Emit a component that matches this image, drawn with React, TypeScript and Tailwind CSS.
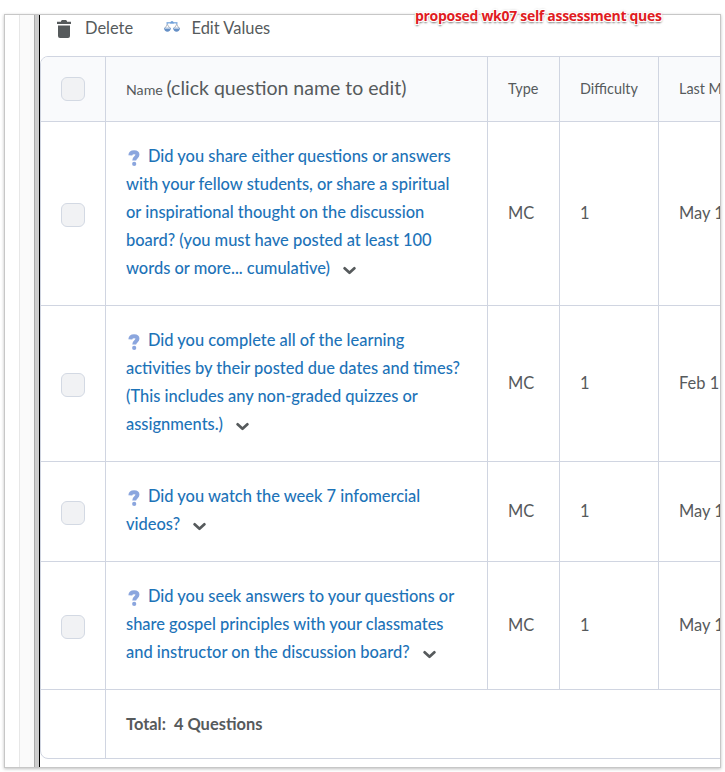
import React from "react";

type Question = { lines: string[]; date: string; height: string };

const questions: Question[] = [
  {
    lines: [
      "Did you share either questions or answers",
      "with your fellow students, or share a spiritual",
      "or inspirational thought on the discussion",
      "board? (you must have posted at least 100",
      "words or more... cumulative)",
    ],
    date: "May 1",
    height: "h-[184px]",
  },
  {
    lines: [
      "Did you complete all of the learning",
      "activities by their posted due dates and times?",
      "(This includes any non-graded quizzes or",
      "assignments.)",
    ],
    date: "Feb 1",
    height: "h-[156px]",
  },
  { lines: ["Did you watch the week 7 infomercial", "videos?"], date: "May 1", height: "h-[100px]" },
  {
    lines: [
      "Did you seek answers to your questions or",
      "share gospel principles with your classmates",
      "and instructor on the discussion board?",
    ],
    date: "May 1",
    height: "h-[128px]",
  },
];

const columns = "grid grid-cols-[65px_382px_72px_99px_62px] border-b border-[#d0d5e1]";
const cell = "flex items-center border-r border-[#d0d5e1] whitespace-nowrap";

function Checkbox() {
  return <span className="ml-5 size-6 rounded-md border border-[#d3d9e3] bg-[#f1f2f4]" />;
}

function QuestionIcon() {
  return (
    <svg className="mr-1.5 mt-[3px] ml-0.5 inline-block h-4 w-3.5" viewBox="0 0 14 16" fill="none">
      <path d="M2.300 5.300C2.500 3 4.100 2.200 6.100 2.200c2.200 0 3.400 1 3.400 2.600C9.500 7.200 6.200 7.300 6.200 10.500" stroke="#8ba6de" strokeWidth="3.900" />
      <circle cx="6.200" cy="13.900" r="2.100" fill="#8ba6de" />
    </svg>
  );
}

function Chevron() {
  return (
    <svg className="ml-[13px] mt-1 inline-block h-[13px] w-[13px]" viewBox="0 0 13 13" fill="none">
      <path d="M1.600 4.300 6.500 8.800 11.400 4.300" stroke="#565a5c" strokeWidth="2.700" strokeLinecap="round" strokeLinejoin="round" />
    </svg>
  );
}

function TrashIcon() {
  return (
    <svg className="h-[18px] w-[14px]" viewBox="0 0 14 18" fill="#565a5c">
      <path d="M0 1.800h4V1l1-1h4l1 1v.8h4v2.200H0zM1 5.500h12V16q0 2-2 2H3q-2 0-2-2z" />
    </svg>
  );
}

function ScalesIcon() {
  return (
    <svg className="h-4 w-4" viewBox="0 0 16 16" fill="none">
      <path d="M3.300 4.800V2.800h9.400v2" stroke="#8db4e2" strokeWidth="1.600" />
      <path d="M6 3.600 6.800 1.500q1.200-.8 2.400 0L10 3.600z" fill="#6f9fd8" />
      <path d="M3.300 4.500.8 8.500m2.500-4L6 8.500m6.700-4L10 8.500m2.700-4 2.500 4" stroke="#b0b5bf" strokeWidth="1" />
      <path d="M0 7.800h6.900c0 5.200-6.900 5.200-6.900 0M9.100 7.800H16c0 5.200-6.900 5.200-6.900 0" fill="#6690c6" />
      <path d="M.8 8.300h5.300M9.900 8.300h5.300" stroke="#c6d6ea" strokeWidth="1" />
    </svg>
  );
}

export default function App() {
  return (
    <div className="relative h-[772px] w-[725px] overflow-hidden bg-white font-['Lato',sans-serif] text-[#565a5c]">
      <div className="pl-1 pt-[14px]">
        <div className="flex h-[754px] w-[717px] overflow-hidden border border-[#c7c7c7] bg-white shadow-[0_1px_3px_rgba(0,0,0,0.25)]">
          <div className="w-[14px] shrink-0" />
          <div className="w-[15px] shrink-0 border-l border-[#e7e7e7] bg-[#fafafa]" />
          <div className="w-[5px] shrink-0 border-l border-[#aaa] bg-[#cdcdcd]" />
          <div className="w-px shrink-0 bg-black" />
          <main className="w-[680px] shrink-0 overflow-hidden">
            <div className="flex h-[41px] items-start pl-[17px] text-[16.45px] leading-[26px]">
              <div className="mt-[5px]"><TrashIcon /></div>
              <span className="ml-[14px] w-[79px]">Delete</span>
              <div className="mt-[5px]"><ScalesIcon /></div>
              <span className="ml-[11.5px]">Edit Values</span>
            </div>
            <div className="w-[700px] overflow-hidden rounded-lg border border-[#d0d5e1]">
              <div className="grid h-[65px] grid-cols-[65px_382px_72px_99px_80px] border-b border-[#d0d5e1] bg-[#f9fafc] text-[14.4px]">
                <div className={cell}><Checkbox /></div>
                <div className={cell + " pb-0.5 pl-5"}>
                  <span><span className="text-[14.2px]">Name </span><span className="text-[19.5px]">(click question name to edit)</span></span>
                </div>
                <div className={cell + " pl-5"}>Type</div>
                <div className={cell + " pl-5"}>Difficulty</div>
                <div className={cell + " pl-5"}>Last Modified</div>
              </div>
              {questions.map((q, i) => (
                <div key={i} className={columns + " " + q.height + " text-[16.45px]"}>
                  <div className={cell + " pt-[3px]"}><Checkbox /></div>
                  <div className={cell + " pb-[3px] pl-5 leading-7 font-medium text-[#1d73b8]"}>
                    <div>
                      {q.lines.map((line, j) => (
                        <div key={j} className="flex h-7 items-center">
                          {j === 0 && <QuestionIcon />}
                          <span>{line}</span>
                          {j === q.lines.length - 1 && <Chevron />}
                        </div>
                      ))}
                    </div>
                  </div>
                  <div className={cell + " pl-5"}>MC</div>
                  <div className={cell + " pl-5"}>1</div>
                  <div className="flex items-center whitespace-nowrap pl-5">{q.date}</div>
                </div>
              ))}
              <div className="flex h-[68px] text-[16.45px] font-bold">
                <div className="w-[65px] border-r border-[#d0d5e1]" />
                <div className="flex items-center whitespace-pre pl-5 pt-px">Total:  4 Questions</div>
              </div>
            </div>
          </main>
        </div>
      </div>
      <div className="absolute left-[415px] top-[6px] whitespace-nowrap font-['Open_Sans',sans-serif] text-[14px] font-bold leading-5 tracking-[-0.3px] text-[#e01b22] [text-shadow:0_0_1px_white,1px_1px_0_white,-1px_-1px_0_white,1px_-1px_0_white,-1px_1px_0_white,0_2px_2px_#777,0_0_3px_#999]">
        proposed wk07 self assessment ques
      </div>
    </div>
  );
}
